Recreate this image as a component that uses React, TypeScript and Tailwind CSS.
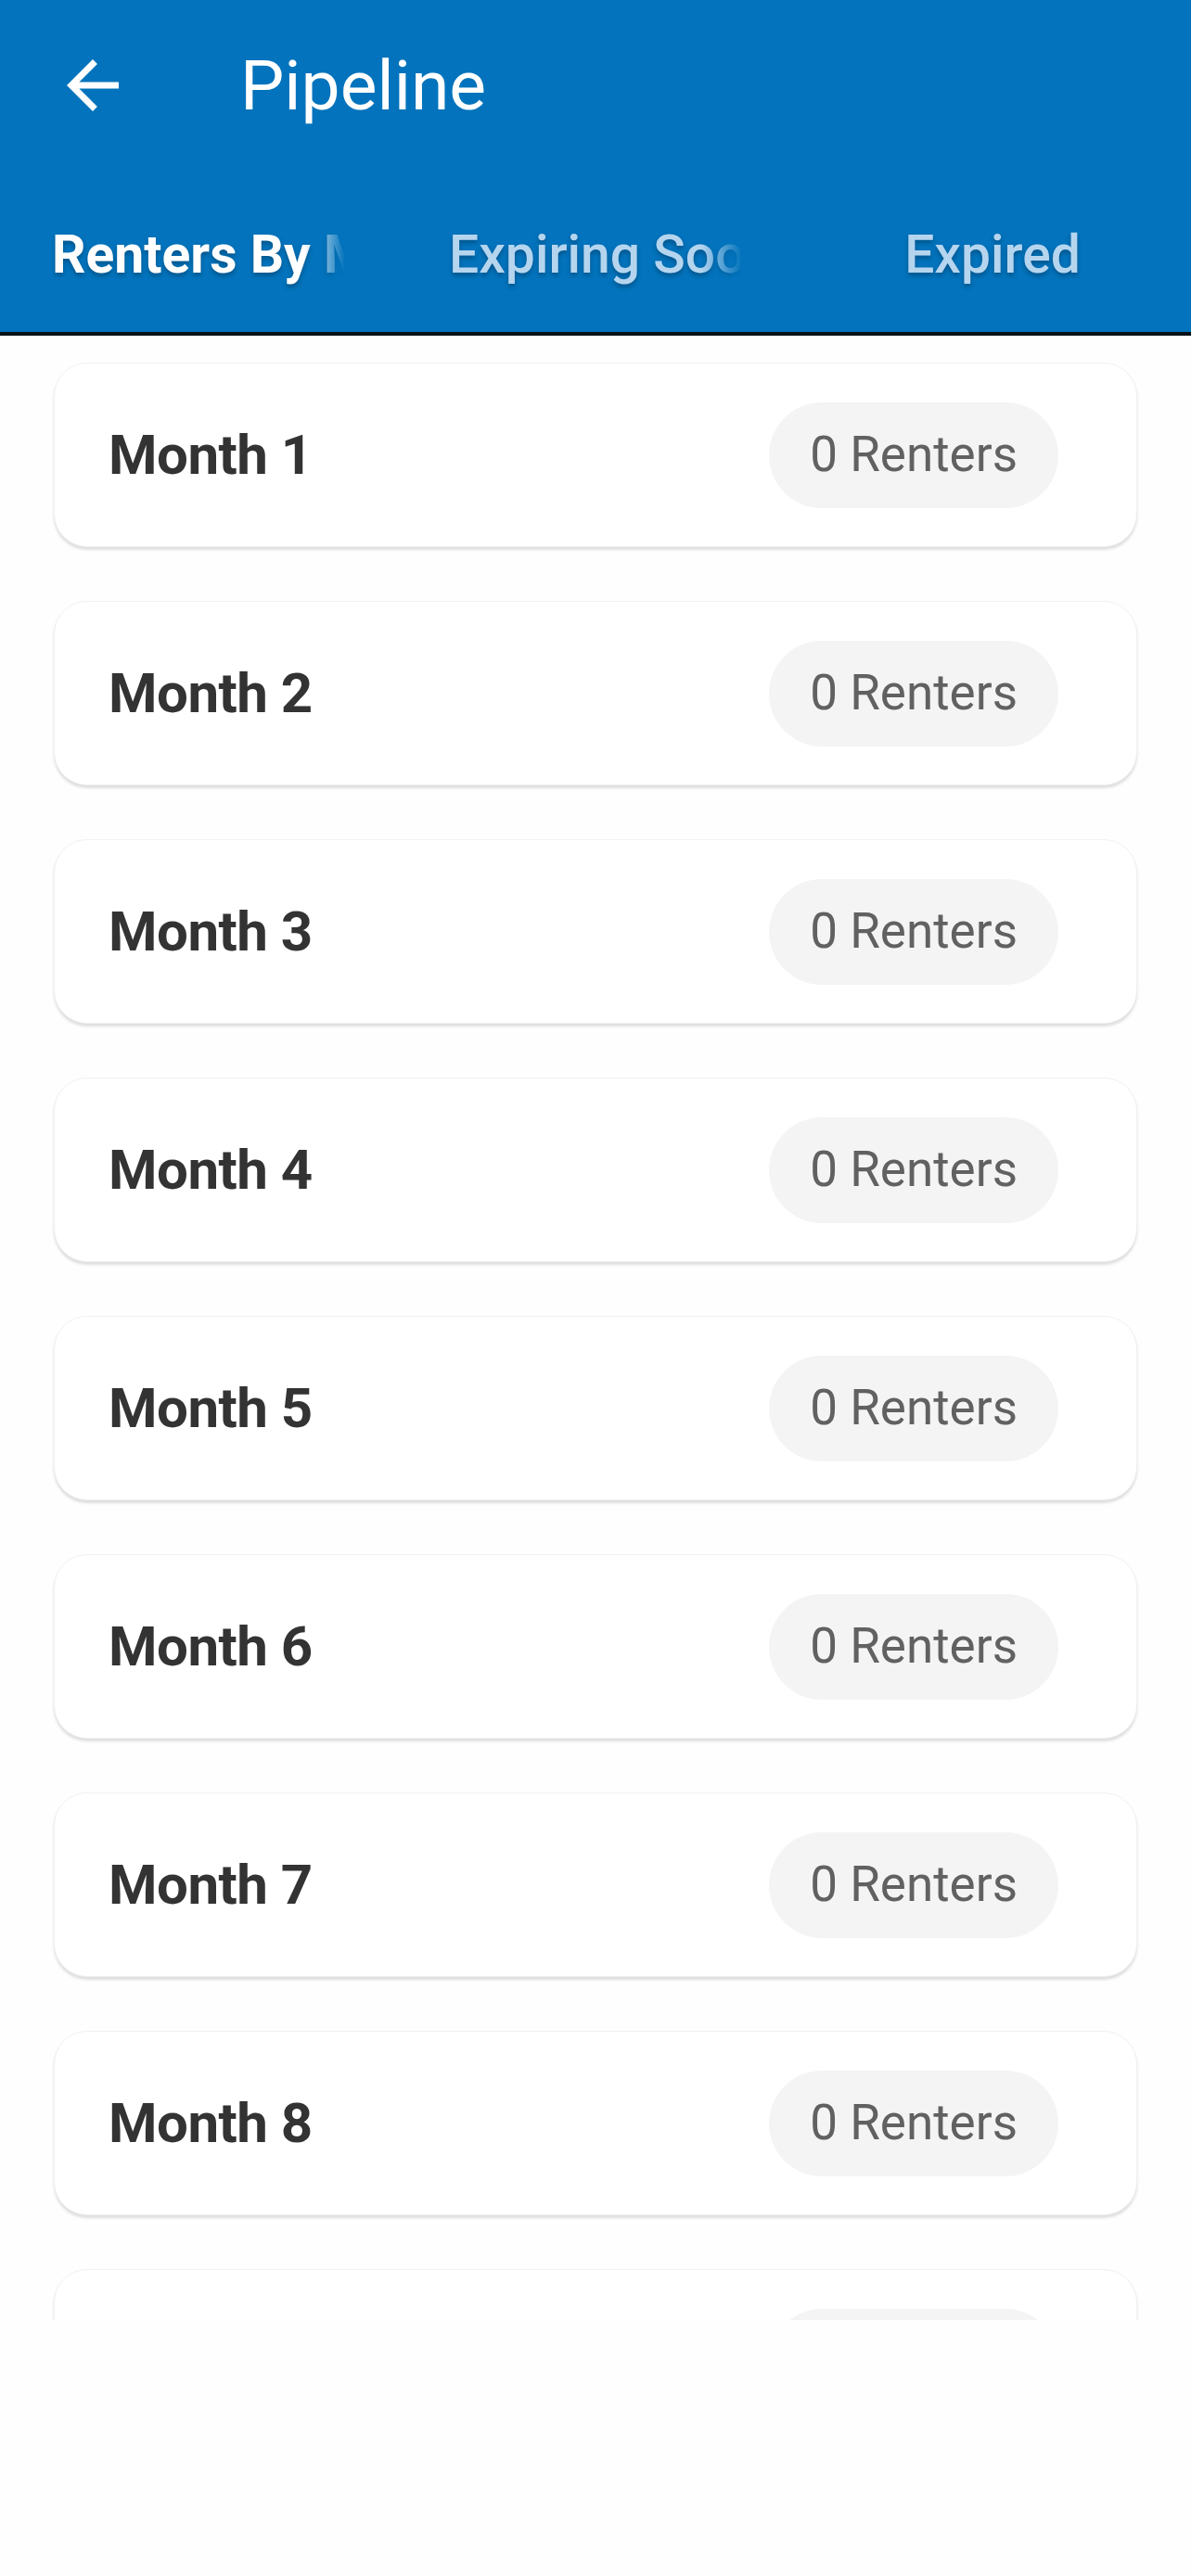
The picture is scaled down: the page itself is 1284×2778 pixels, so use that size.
import React from 'react';

const months = Array.from({ length: 9 }, (_, i) => ({ label: `Month ${i + 1}`, count: 0 }));

const tabs = [
  { label: 'Renters By Month', active: true, clipped: true },
  { label: 'Expiring Soon', active: false, clipped: true },
  { label: 'Expired', active: false, clipped: false },
];

function BackArrow() {
  return (
    <svg viewBox="0 0 24 24" className="w-[84px] h-[84px]" fill="#ffffff">
      <path d="M20 11H7.83l5.59-5.59L12 4l-8 8 8 8 1.41-1.41L7.83 13H20v-2z" />
    </svg>
  );
}

export default function App() {
  return (
    <div className="w-[1284px] h-[2778px] bg-[#fefefe] overflow-hidden font-['Roboto',sans-serif]">
      {/* App bar + tabs */}
      <header className="bg-[#0273bc] border-b-[4px] border-[#0a1118]">
        <div className="h-[184px] flex items-center pl-[58px]">
          <BackArrow />
          <h1 className="ml-[117px] text-[75px] leading-none text-white">Pipeline</h1>
        </div>
        <div className="h-[174px] grid grid-cols-3 pt-[6px]">
          {tabs.map((t) => (
            <div key={t.label} className="px-[56px] flex items-center justify-center overflow-hidden">
              <span
                className={
                  'block whitespace-nowrap overflow-hidden text-[57px] leading-none py-[12px] [text-shadow:0_3px_5px_rgba(0,0,0,0.28)] ' +
                  (t.active ? 'font-bold text-white ' : 'font-medium text-[#b5d5ef] ') +
                  (t.clipped ? 'w-full [mask-image:linear-gradient(to_right,black_86%,transparent)]' : '')
                }
              >
                {t.label}
              </span>
            </div>
          ))}
        </div>
      </header>

      {/* Month list */}
      <main className="h-[2140px] overflow-hidden px-[58px] pt-[29px] flex flex-col gap-[58px]">
        {months.map((m) => (
          <div
            key={m.label}
            className="shrink-0 h-[199px] rounded-[36px] bg-white border border-[#f1f1f1] shadow-[0_3px_3px_rgba(0,0,0,0.13)] flex items-center justify-between pl-[58px] pr-[84px]"
          >
            <span className="text-[60px] font-bold text-[#333333] tracking-[-0.5px]">{m.label}</span>
            <span className="h-[114px] px-[44px] rounded-full bg-[#f4f4f4] flex items-center text-[53px] text-[#616161]">
              {m.count} Renters
            </span>
          </div>
        ))}
      </main>
    </div>
  );
}
